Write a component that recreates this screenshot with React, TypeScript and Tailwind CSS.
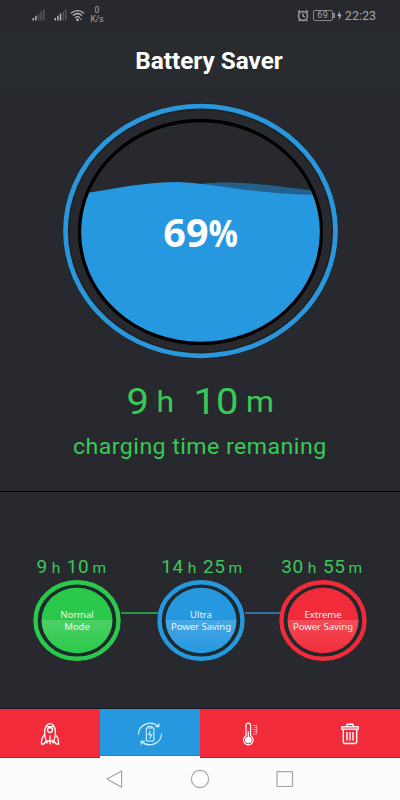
import type { ReactNode } from "react";

interface ModeProps {
  hours: string;
  minutes: string;
  color: string;
  light: string;
  id: string;
  lines: string[];
}

const modes: ModeProps[] = [
  { id: "normal", hours: "9", minutes: "10", color: "#2bc94b", light: "#4cd065", lines: ["Normal", "Mode"] },
  { id: "ultra", hours: "14", minutes: "25", color: "#2598e0", light: "#48a6e3", lines: ["Ultra", "Power Saving"] },
  { id: "extreme", hours: "30", minutes: "55", color: "#f22b3a", light: "#f24c58", lines: ["Extreme", "Power Saving"] },
];

function Signal({ bars }: { bars: number }) {
  return (
    <svg width="13" height="12" viewBox="0 0 13 12">
      {[0, 1, 2, 3, 4].map((i) => (
        <rect
          key={i}
          x={0.5 + i * 2.6}
          y={9 - i * 2.2}
          width="1.5"
          height={2.5 + i * 2.2}
          fill={i < bars ? "#b4b5b7" : "#55575a"}
        />
      ))}
    </svg>
  );
}

function StatusBar() {
  return (
    <div className="flex h-[30px] items-start justify-between pl-8 pr-[24px] text-[#a4a5a8]">
      <div className="flex items-start">
        <div className="mt-[9px] mr-[9px]">
          <Signal bars={2} />
        </div>
        <div className="mt-[9px] mr-[3px]">
          <Signal bars={3} />
        </div>
        <svg className="mt-[9px] mr-[5px]" width="15" height="13" viewBox="0 0 15 13" fill="none" stroke="#b4b5b7" strokeWidth="1.3">
          <path d="M1 4.2C4.8.7 10.2.7 14 4.2" />
          <path d="M3 6.500c2.700-2.400 6.300-2.400 9 0" />
          <path d="M5.200 8.700c1.500-1.300 3.200-1.300 4.700 0" />
          <circle cx="7.500" cy="10.800" r=".7" fill="#b4b5b7" />
          <path d="M10 10.500l1.500-.8" />
        </svg>
        <div className="mt-[6px] w-[14px] text-center text-[8.500px] leading-[9px]">
          <div>0</div>
          <div>K/s</div>
        </div>
      </div>
      <div className="mt-[9px] flex h-[13px] items-center">
        <svg width="12" height="13" viewBox="0 0 12 13" fill="none" stroke="currentColor" strokeWidth="1.300">
          <circle cx="6" cy="7" r="4.500" />
          <path d="M6 4.500V7l2 1.300M.8 3.200 3 1.200M11.200 3.200 9 1.200M2.800 10.500 1.700 12M9.200 10.500l1.100 1.500" />
        </svg>
        <div className="ml-[4px] flex h-[11px] w-[20px] items-center justify-center rounded-[2px] border border-[#85878a] text-[9px] leading-none tracking-[0.500px]">
          69
        </div>
        <div className="h-[5px] w-[2px] bg-[#85878a]" />
        <svg className="ml-[2px] mr-[3px]" width="5" height="9" viewBox="0 0 5 9">
          <path d="M3 0 .4 5h1.800L1.700 9 4.700 3.700H2.800z" fill="#b4b5b7" />
        </svg>
        <span className="text-[12.500px] leading-[13px]">22:23</span>
      </div>
    </div>
  );
}

function Gauge() {
  return (
    <div className="grid h-[277px] w-full place-items-center pt-[9px]">
      <svg className="col-start-1 row-start-1" width="284" height="264" viewBox="58 99 284 264">
        <defs>
          <clipPath id="bowl">
            <ellipse cx="200.500" cy="232" rx="120" ry="110.500" />
          </clipPath>
        </defs>
        <ellipse cx="200.500" cy="231" rx="134.500" ry="124.300" fill="none" stroke="#1f2024" strokeWidth="7" />
        <ellipse cx="200.500" cy="231" rx="135" ry="124.800" fill="none" stroke="#2a96dc" strokeWidth="4.800" />
        <g clipPath="url(#bowl)">
          <path d="M200 184C230 180 265 184 330 193V202H200z" fill="#24608c" />
          <path
            d="M70 195.500C110 190 140 182 178 182C215 183 255 195.500 330 195V360H70z"
            fill="#2598e0"
          />
        </g>
        <ellipse cx="200.500" cy="232" rx="121" ry="111.500" fill="none" stroke="#000" strokeWidth="3.300" />
      </svg>
      <div className="z-10 col-start-1 row-start-1 mt-[2px] flex items-baseline pl-[1px] font-['Open_Sans',sans-serif] text-[39.500px] font-bold leading-[40px] text-white">
        <span>69</span>
        <span className="-mx-[2.500px] inline-block scale-x-[0.86] text-[38px]">%</span>
      </div>
    </div>
  );
}

function ModeTime({ hours, minutes }: { hours: string; minutes: string }) {
  return (
    <div className="flex h-[20px] items-baseline justify-center whitespace-nowrap text-[19px] leading-[20px] tracking-[0.600px] text-[#38c956]">
      <span>{hours}</span>
      <span className="ml-[4px] text-[15.500px]">h</span>
      <span className="ml-[6px]">{minutes}</span>
      <span className="ml-[3px] text-[15.500px]">m</span>
    </div>
  );
}

function Mode({ id, hours, minutes, color, light, lines }: ModeProps) {
  return (
    <div className="w-[88px]">
      <div className={id === "normal" ? "-ml-[11px]" : id === "extreme" ? "-ml-[2px]" : "ml-[2px]"}>
        <ModeTime hours={hours} minutes={minutes} />
      </div>
      <div className="mt-[3px] grid place-items-center">
        <svg className="col-start-1 row-start-1" width="88" height="82" viewBox="0 0 88 82">
          <defs>
            <linearGradient id={id} x1="0" y1="0" x2="0" y2="1">
              <stop offset="0.500" stopColor={color} />
              <stop offset="0.500" stopColor={light} />
              <stop offset="1" stopColor={color} />
            </linearGradient>
          </defs>
          <ellipse cx="44" cy="40.500" rx="41.500" ry="38.200" fill="#1d2a2c" stroke={color} strokeWidth="4.400" />
          <ellipse cx="44" cy="40.500" rx="35.500" ry="32.800" fill={`url(#${id})`} />
        </svg>
        <div className="z-10 col-start-1 row-start-1 whitespace-nowrap text-center font-['Noto_Sans',sans-serif] text-[9.500px] leading-[12px] text-[#eef5f3]">
          {lines.map((line) => (
            <div key={line}>{line}</div>
          ))}
        </div>
      </div>
    </div>
  );
}

function Link({ color }: { color: string }) {
  return (
    <div className="mt-[55px] w-[40px] shrink-0">
      <svg className="block" width="40" height="3">
        <path d="M0 1h40" stroke={color} strokeWidth="1.500" />
      </svg>
    </div>
  );
}

function Tab({ active, children }: { active?: boolean; children: ReactNode }) {
  return (
    <button
      type="button"
      className={
        active
          ? "flex h-[47px] w-[100px] items-center justify-center border-b border-[#2087c9] bg-[#2598e0] pt-[3px]"
          : "flex h-[49px] w-[100px] items-center justify-center border-b border-[#b51f2c] bg-[#f22b3a] pt-[1px]"
      }
    >
      {children}
    </button>
  );
}

function TabBar() {
  return (
    <div className="flex h-[49px] items-start bg-[#fcfcfc]">
      <Tab>
        <svg width="20" height="24" viewBox="0 0 20 24" fill="none" stroke="#fff" strokeWidth="1.300" strokeLinejoin="round">
          <path d="M6.300 19C4 14 3.700 6 7.500 2.500Q10 .6 12.500 2.500C16.300 6 16 14 13.700 19z" />
          <circle cx="10" cy="8" r="2.500" />
          <path d="M6.500 4.600h7M4.600 12.800C2.500 14.500 1.400 16.500 1.400 22h2.400l2.500-3M15.400 12.800C17.500 14.500 18.600 16.500 18.600 22h-2.400l-2.500-3M10 13.500v9M7 19v2.500M13 19v2.500" />
        </svg>
      </Tab>
      <Tab active>
        <svg width="26" height="24" viewBox="0 0 26 24" fill="none" stroke="#d7f5fb" strokeWidth="1.100">
          <path d="M1.500 12.500C1.500 2.500 14-2.500 21.500 4.500M21.800 1.200v3.500h-3.600" />
          <path d="M24.500 11.500C24.500 21.500 12 26.500 4.500 19.500M4.200 22.800v-3.500h3.600" />
          <rect x="9.300" y="6" width="7.600" height="13" rx=".8" />
          <path d="M11.200 6V4.300h3.800V6M13.500 9l-2 3.800h3.200L12.700 16.500" />
        </svg>
      </Tab>
      <Tab>
        <svg width="16" height="24" viewBox="0 0 16 24" fill="none" stroke="#fff" strokeWidth="1.200">
          <path d="M4 13.800V3.500a2.300 2.300 0 0 1 4.600 0v10.300a4.800 4.800 0 1 1-4.600 0z" />
          <circle cx="6.300" cy="18" r="2.700" fill="#fff" />
          <path d="M6.300 9v8" />
          <path d="M11 3.500h4M12 5.500h3M11 7.500h4M12 9.500h3M11 12h4M14.800 3.500V12" strokeWidth=".8" opacity=".7" />
        </svg>
      </Tab>
      <Tab>
        <svg width="18" height="22" viewBox="0 0 18 22" fill="none" stroke="#fff" strokeWidth="1.400">
          <rect x=".8" y="3.800" width="16.400" height="2.400" />
          <path d="M6 3.800V1.300h6v2.500M2.300 6.200v12.300q0 2 2 2h9.400q2 0 2-2V6.200M6 9v8.500M9 9v8.500M12 9v8.500" />
        </svg>
      </Tab>
    </div>
  );
}

function SystemNav() {
  return (
    <div className="flex h-[42px] items-center bg-[#fcfcfc] pl-[106px]">
      <svg width="188" height="20" viewBox="0 0 188 20" fill="none" stroke="#a5a5a5" strokeWidth="1.200">
        <path d="M1 10 15.600 2v16.200z" strokeLinejoin="round" />
        <circle cx="94" cy="10" r="8.600" />
        <rect x="171" y="2.700" width="15.500" height="14.800" rx=".6" />
      </svg>
    </div>
  );
}

export default function App() {
  return (
    <div className="flex h-[800px] w-[400px] flex-col overflow-hidden bg-[#28292e] font-[Roboto,sans-serif]">
      <StatusBar />
      <header className="flex h-[58px] items-center justify-center bg-[#282c2f] pl-[18px] pt-[3px]">
        <h1 className="text-[24.300px] font-bold leading-[28px] text-white">Battery Saver</h1>
      </header>

      <section className="flex h-[403px] flex-col items-center">
        <Gauge />
        <div className="mt-[17px] flex h-[40px] scale-x-[1.080] items-baseline text-[37px] leading-[40px] text-[#38c956]">
          <span>9</span>
          <span className="ml-[7px] -translate-y-[2.500px] text-[29.500px] leading-[30px]">h</span>
          <span className="ml-[18px]">10</span>
          <span className="ml-[7px] -translate-y-[2.500px] text-[29.500px] leading-[30px]">m</span>
        </div>
        <p className="mt-[11px] scale-x-[1.050] text-[22px] leading-[28px] tracking-[0.450px] text-[#38c956]">
          charging time remaning
        </p>
      </section>

      <section className="flex h-[218px] items-start border-t border-b border-t-black border-b-[#17181b] pl-[33px] pt-[65px]">
        <Mode {...modes[0]} />
        <div className="w-[36px] shrink-0">
          <Link color="#2fb84c" />
        </div>
        <Mode {...modes[1]} />
        <div className="w-[34px] shrink-0">
          <Link color="#3489c6" />
        </div>
        <Mode {...modes[2]} />
      </section>

      <TabBar />
      <SystemNav />
    </div>
  );
}
